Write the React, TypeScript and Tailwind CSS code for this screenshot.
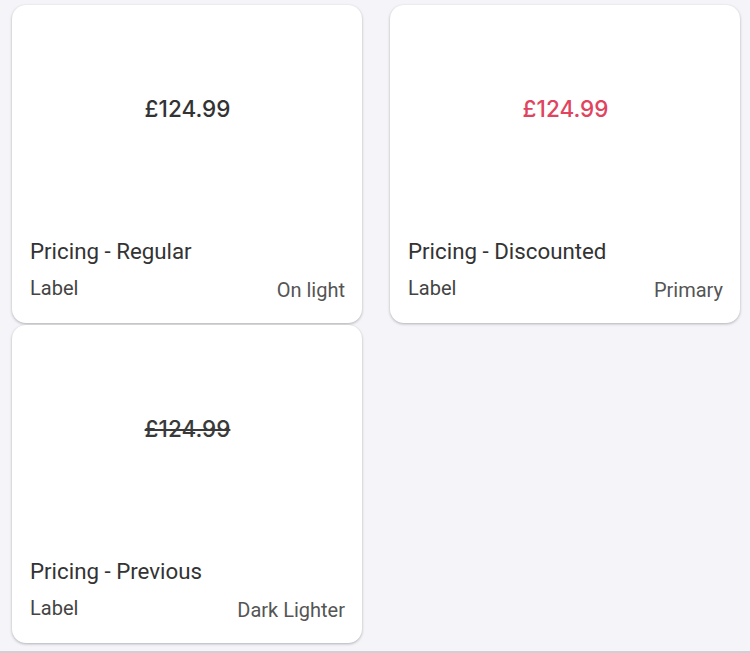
import React from "react";

type CardProps = {
  title: string;
  right: string;
  priceClass: string;
};

function Card({ title, right, priceClass }: CardProps) {
  return (
    <div className="w-[350px] h-[318px] bg-white rounded-[14px] shadow-[0_1px_3px_rgba(0,0,0,0.28)] flex flex-col pl-[18px] pr-[17px] pb-[23px]">
      <div className="h-[208px] flex items-center justify-center">
        <span
          className={"text-[22.5px] leading-[28px] font-medium " + priceClass}
          style={{ fontFamily: "Inter, 'Liberation Sans', sans-serif" }}
        >
          £124.99
        </span>
      </div>
      <div className="mt-[24px] text-[22.3px] leading-[28px] text-[#333333]">{title}</div>
      <div className="mt-[11px] h-[24px] flex justify-between text-[20px] leading-[24px]">
        <span className="text-[#444444]">Label</span>
        <span className="text-[#555555] translate-y-[2px]">{right}</span>
      </div>
    </div>
  );
}

export default function App() {
  return (
    <div
      className="w-[750px] h-[653px] bg-[#f4f4f9] border-b-2 border-[#cfcfd4] overflow-hidden"
      style={{ fontFamily: "Roboto, 'Liberation Sans', sans-serif" }}
    >
      <div className="grid grid-cols-[350px_350px] gap-x-[28px] gap-y-[2px] pl-[12px] pt-[5px]">
        <Card title="Pricing - Regular" right="On light" priceClass="text-[#333333]" />
        <Card title="Pricing - Discounted" right="Primary" priceClass="text-[#e0445e]" />
        <Card title="Pricing - Previous" right="Dark Lighter" priceClass="text-[#3a3a3a] line-through" />
      </div>
    </div>
  );
}
